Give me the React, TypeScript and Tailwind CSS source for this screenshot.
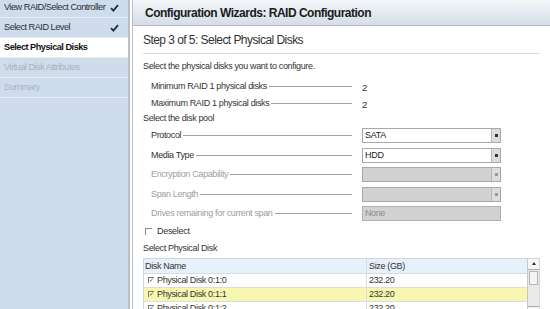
import React from 'react';

const font = { fontFamily: '"Liberation Sans", Arial, sans-serif' };

const Check = () => (
    <svg width="9" height="8" viewBox="0 0 9 8" className="shrink-0">
        <path d="M1 4.2 L3.4 6.6 L8 1.2" fill="none" stroke="#1f2f4a" strokeWidth="1.8" />
    </svg>
);

const Arrow = ({ dim }: { dim?: boolean }) => (
    <div className="w-[9px] h-full bg-[#dcdcdc] border-l border-[#b8b8b8] flex items-center justify-center">
        <div className={`w-[3px] h-[3px] ${dim ? 'bg-[#9a9a9a]' : 'bg-[#333]'}`}></div>
    </div>
);

const Field: React.FC<{ label: string; dim?: boolean; children: React.ReactNode }> = ({ label, dim, children }) => (
    <div className="flex items-center h-[19.5px] pl-[8px]">
        <div className="w-[201px] flex items-center">
            <span className={`text-[9px] tracking-[-0.35px] whitespace-nowrap ${dim ? 'text-[#9aa0a6]' : 'text-[#333]'}`}>{label}</span>
            <div className="flex-1 ml-[2px] border-b border-[#a0a0a0]"></div>
        </div>
        <div className="ml-[10px] w-[139px]">{children}</div>
    </div>
);

const Select: React.FC<{ value?: string; disabled?: boolean }> = ({ value, disabled }) => (
    <div className={`h-[15px] border border-[#a8a8a8] flex items-stretch ${disabled ? 'bg-[#d2d2d2]' : 'bg-white'}`}>
        <span className="flex-1 text-[9px] tracking-[-0.3px] pl-[2px] leading-[13px] text-[#222]">{value}</span>
        <Arrow dim={disabled} />
    </div>
);

const sideItems = [
    { label: 'View RAID/Select Controller', done: true },
    { label: 'Select RAID Level', done: true },
    { label: 'Select Physical Disks', active: true },
    { label: 'Virtual Disk Attributes', dim: true },
    { label: 'Summary', dim: true },
];

export default function App() {
    return (
        <div className="w-[550px] h-[309px] overflow-hidden flex bg-white" style={font}>
            {/* Sidebar */}
            <div className="w-[130px] shrink-0 bg-[#cfdcec] border-r-2 border-[#b9bfc7]">
                <div className="mt-[-2px]">
                    {sideItems.map((it) => (
                        <div
                            key={it.label}
                            className={`h-[20px] flex items-center justify-between pl-[4px] pr-[9px] border-b border-[#e6edf6] ${it.active ? 'bg-white' : ''}`}
                        >
                            <span
                                className={`text-[9.2px] tracking-[-0.5px] whitespace-nowrap ${it.active ? 'font-bold text-[#111]' : it.dim ? 'text-[#aab3bf]' : 'text-[#2b2f36]'}`}
                            >
                                {it.label}
                            </span>
                            {it.done && <Check />}
                        </div>
                    ))}
                </div>
            </div>

            {/* Main */}
            <div className="flex-1 ml-[2px] border-l border-[#b9bfc7] flex flex-col">
                <div className="h-[26px] shrink-0 bg-gradient-to-b from-[#f4f7fa] to-[#d5dde7] border-b border-[#b5bcc6] flex items-center pl-[12px]">
                    <span className="text-[12px] font-bold tracking-[-0.5px] text-[#1b1b1b]">Configuration Wizards: RAID Configuration</span>
                </div>

                <div className="pl-[10px] pr-[10px]">
                    <div className="h-[28px] flex items-center border-b border-[#d8d8d8]">
                        <span className="text-[12px] tracking-[-0.55px] text-[#333]">Step 3 of 5: Select Physical Disks</span>
                    </div>

                    <div className="mt-[6px] text-[9px] tracking-[-0.35px] text-[#333]">Select the physical disks you want to configure.</div>

                    <div className="mt-[3px]">
                        <Field label="Minimum RAID 1 physical disks">
                            <span className="text-[9.5px] text-[#333]">2</span>
                        </Field>
                        <div className="-mt-[2.5px]">
                            <Field label="Maximum RAID 1 physical disks">
                                <span className="text-[9.5px] text-[#333]">2</span>
                            </Field>
                        </div>
                    </div>

                    <div className="-mt-[1px] text-[9px] tracking-[-0.35px] text-[#333] leading-[12px]">Select the disk pool</div>

                    <div className="mt-[2px]">
                        <Field label="Protocol"><Select value="SATA" /></Field>
                        <Field label="Media Type"><Select value="HDD" /></Field>
                        <Field label="Encryption Capability" dim><Select disabled /></Field>
                        <Field label="Span Length" dim><Select disabled /></Field>
                        <Field label="Drives remaining for current span" dim>
                            <div className="h-[15px] bg-[#d2d2d2] border border-[#b0b0b0] text-[9px] tracking-[-0.4px] pl-[2px] leading-[13px] text-[#8a8a8a]">None</div>
                        </Field>
                    </div>

                    <div className="mt-[1px] flex items-center h-[14px] pl-[2px]">
                        <div className="w-[7px] h-[7px] border-l border-t border-[#888]"></div>
                        <span className="ml-[5px] text-[9px] tracking-[-0.3px] text-[#333]">Deselect</span>
                    </div>
                    <div className="mt-[2px] h-[14px] text-[9px] tracking-[-0.35px] text-[#333] leading-[14px]">Select Physical Disk</div>

                    {/* Table */}
                    <div className="mt-[3px] w-[397px] border border-[#cfd6de] flex">
                        <div className="flex-1">
                            <div className="h-[15px] flex bg-[#e6f1fb] border-b border-[#d5dde5] text-[9px] tracking-[-0.35px] text-[#333] leading-[14px]">
                                <div className="w-[223px] pl-[1px] border-r border-[#d5dde5]">Disk Name</div>
                                <div className="flex-1 pl-[2px]">Size (GB)</div>
                            </div>
                            {[
                                { name: 'Physical Disk 0:1:0', size: '232.20', bg: 'bg-white' },
                                { name: 'Physical Disk 0:1:1', size: '232.20', bg: 'bg-[#f7f7b2]' },
                                { name: 'Physical Disk 0:1:2', size: '232.20', bg: 'bg-white' },
                            ].map((r) => (
                                <div key={r.name} className={`h-[14px] flex border-b border-[#dcdcdc] text-[9px] tracking-[-0.35px] text-[#333] leading-[13px] ${r.bg}`}>
                                    <div className="w-[223px] pl-[4px] flex items-center border-r border-[#dcdcdc]">
                                        <span className="w-[6px] h-[6px] border-l border-t border-[#777] relative">
                                            <span className="absolute left-[0px] top-[0px] text-[6px] leading-[5px] text-[#345]">✓</span>
                                        </span>
                                        <span className="ml-[3px]">{r.name}</span>
                                    </div>
                                    <div className="flex-1 pl-[2px]">{r.size}</div>
                                </div>
                            ))}
                        </div>
                        <div className="w-[12px] bg-[#e9e9e9] border-l border-[#c8c8c8] flex flex-col">
                            <div className="h-[11px] bg-[#f6f6f6] border-b border-[#aaa] flex items-center justify-center">
                                <div className="w-0 h-0 border-l-[2px] border-r-[2px] border-b-[3px] border-l-transparent border-r-transparent border-b-[#333]"></div>
                            </div>
                            <div className="h-[14px] mx-[1px] mt-[1px] bg-[#f4f4f4] border border-[#b5b5b5]"></div>
                            <div className="flex-1"></div>
                            <div className="h-[10px] bg-[#f6f6f6] border-t border-[#aaa] flex items-center justify-center">
                                <div className="w-0 h-0 border-l-[2px] border-r-[2px] border-t-[3px] border-l-transparent border-r-transparent border-t-[#333]"></div>
                            </div>
                        </div>
                    </div>
                </div>
            </div>
        </div>
    );
}
